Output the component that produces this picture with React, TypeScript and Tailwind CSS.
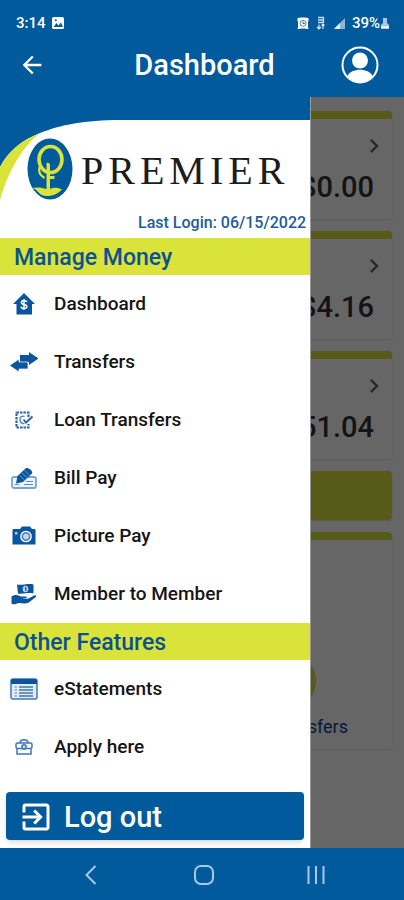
import React from 'react';
import { MdArrowBack, MdChevronRight, MdExitToApp } from 'react-icons/md';

interface MenuItem {
  label: string;
  icon: React.ReactNode;
}

const accounts = [
  { id: 'checking', balance: '$0.00' },
  { id: 'savings', balance: '$4.16' },
  { id: 'loan', balance: '$51.04' }
];

function HouseIcon() {
  return <svg viewBox="0 0 24 24" className="w-6 h-6" aria-hidden="true">
      <path d="M12 1 1 12h3.500v10.500h15.500V12H23Z" fill="#0b559f" />
      <path d="M14.800 10c-.4-1.200-1.400-1.500-2.800-1.500-1.500 0-2.600.7-2.600 1.900 0 3 5.400 1.200 5.400 4.200 0 1.300-1.200 2-2.800 2s-2.700-.6-2.900-2M12 7v11" fill="none" stroke="#fff" strokeWidth="1.500" />
    </svg>;
}

function TransferIcon() {
  return <svg viewBox="0 0 30 22" className="w-[30px] h-[22px]" aria-hidden="true">
      <path d="M11 4h9V1l9.500 6.500L20 14v-3h-9Z" fill="#0b559f" />
      <path d="M19 11h-9V8L.5 14.500 10 21v-3h9Z" fill="#0b559f" stroke="#fff" strokeWidth=".7" />
    </svg>;
}

function LoanIcon() {
  return <svg viewBox="0 0 20 20" className="w-5 h-5" aria-hidden="true">
      <path d="M14.500 7V2.500H2.500v15h12V14" fill="none" stroke="#2a66a8" strokeWidth="2.200" strokeDasharray="2.600 .9" />
      <path d="M10.500 6.500c-3-1-4.500.5-4.500 3s1.500 4.500 4.500 4" fill="none" stroke="#5d8cc0" strokeWidth="1.500" />
      <path d="m9.500 9.500 2.500 3 6.500-6" fill="none" stroke="#2a66a8" strokeWidth="1.900" />
    </svg>;
}

function BillIcon() {
  return <svg viewBox="0 0 26 22" className="w-[26px] h-[22px]" aria-hidden="true">
      <rect x="1" y="10" width="24" height="11" rx="2" fill="#eef4fa" stroke="#7ba5d1" strokeWidth="1.800" />
      <path d="M3.500 18c2-2 3 .5 5-.5M15 14.500h7M13 17.500h9" fill="none" stroke="#5d8cc0" strokeWidth="1" />
      <path d="M5 16.500 6.500 9 14.500 1.500c2-2 8 2.500 6.500 5l-9 8.500Z" fill="#0b559f" />
      <path d="m8.500 8.500 5 4.500M11 6l5 4.500M13.500 3.500l5 4.500" stroke="#7ba5d1" strokeWidth=".8" />
    </svg>;
}

function CameraIcon() {
  return <svg viewBox="0 0 24 20" className="w-6 h-5" aria-hidden="true">
      <path d="M1.500 3H8l2-2.500h8L20 3h2.500q1 0 1 1v14.500H.5V4q0-1 1-1Z" fill="#0b559f" />
      <circle cx="14" cy="10.500" r="5.200" fill="#4f84bd" stroke="#fff" strokeWidth="1.300" />
      <circle cx="14" cy="10.500" r="2.800" fill="#c4d8ec" />
      <rect x="3" y="6" width="2.500" height="2.500" fill="#a9c6e3" />
    </svg>;
}

function MemberIcon() {
  return <svg viewBox="0 0 26 22" className="w-[26px] h-[22px]" aria-hidden="true">
      <path d="M6 1.500c5 1.200 11-1.500 16.500 0v9c-5-1.300-11 1.200-15.500 0Z" fill="#0b559f" />
      <ellipse cx="14.500" cy="6" rx="2.800" ry="3.300" fill="#b9d0e8" />
      <path d="M14.800 4v4" stroke="#0b559f" strokeWidth="1.200" />
      <path d="M.5 13.500c5-3 7-.5 9.500 0h5c1.500.5 1 2-1 2h-3.500c3 .8 6 .6 8-.5l4.500-2.500c2-.8 3 .5 1.500 1.800l-7 5.400c-5 2-9-.8-12 1-2 1-5 .3-5-.2Z" fill="#0b559f" />
    </svg>;
}

function StatementIcon() {
  return <svg viewBox="0 0 28 22" className="w-7 h-[22px]" aria-hidden="true">
      <rect x="1" y="1" width="26" height="20" rx="2" fill="#e3edf7" stroke="#3d78b5" strokeWidth="1.500" />
      <path d="M1 6V3q0-2 2-2h22q2 0 2 2v3Z" fill="#0b559f" />
      <path d="M9 9h14M9 12h14M9 15h14M9 18h14" stroke="#3d78b5" strokeWidth="1.300" />
      <path d="M4.500 9H7M4.500 12H7M4.500 15H7M4.500 18H7" stroke="#85acd4" strokeWidth="1.300" />
    </svg>;
}

function BriefcaseIcon() {
  return <svg viewBox="0 0 18 18" className="w-[18px] h-[18px]" aria-hidden="true">
      <g fill="none" stroke="#3d78b5" strokeWidth="1.500">
        <path d="M5 5c0-4.500 8-4.500 8 0" />
        <rect x="1" y="5" width="16" height="5.500" rx="1.500" />
        <path d="M2 10.500v5.500h14v-5.500" />
        <circle cx="9" cy="9" r="2.200" fill="#c4d8ec" />
      </g>
    </svg>;
}

const moneyItems: MenuItem[] = [
  { label: 'Dashboard', icon: <HouseIcon /> },
  { label: 'Transfers', icon: <TransferIcon /> },
  { label: 'Loan Transfers', icon: <LoanIcon /> },
  { label: 'Bill Pay', icon: <BillIcon /> },
  { label: 'Picture Pay', icon: <CameraIcon /> },
  { label: 'Member to Member', icon: <MemberIcon /> }
];

const otherItems: MenuItem[] = [
  { label: 'eStatements', icon: <StatementIcon /> },
  { label: 'Apply here', icon: <BriefcaseIcon /> }
];

function StatusBar() {
  return <div className="flex items-center justify-between h-9 pt-[10px] pl-4 pr-[14px] text-[15px] leading-5 font-medium">
      <div className="flex items-center gap-[6px]">
        <span>3:14</span>
        <svg viewBox="0 0 12 12" className="w-3 h-3" aria-hidden="true">
          <rect width="12" height="12" rx="1.500" fill="#fff" />
          <path d="m1.500 10 3-4 2 2.500L9 5.500l2 4.500Z" fill="#005a9c" />
          <circle cx="3.800" cy="3.300" r="1" fill="#005a9c" />
        </svg>
      </div>
      <div className="flex items-center gap-[7px]">
        <svg viewBox="0 0 12 12" className="w-3 h-3" aria-hidden="true">
          <path d="M.5 1 4 .5h4l3.500.5v3L11 5v5l.5 2H9L8 11.500H4L3 12H.5L1 10V5L.5 4Z" fill="#fff" />
          <circle cx="6" cy="6.300" r="3" fill="none" stroke="#005a9c" strokeWidth=".7" />
          <path d="M6 4.500v2h1.800" fill="none" stroke="#005a9c" strokeWidth=".9" />
        </svg>
        <svg viewBox="0 0 10 14" className="w-[10px] h-[14px]" aria-hidden="true">
          <path d="M2 1.500h6M2 4h5M2 6.500h6M7.500 1v6" stroke="#c9dcec" strokeWidth="1.300" />
          <path d="M3 13V8.500M1 11l2 2 2-2M7 8v5M5.500 9.500 7 8l1.500 1.500" fill="none" stroke="#dbe8f3" strokeWidth="1.200" />
        </svg>
        <svg viewBox="0 0 12 12" className="w-3 h-3" aria-hidden="true">
          <path d="M12 1v11H1Z" fill="#8db4d3" />
          <path d="M7 6v6H1Z" fill="#e5eff7" />
        </svg>
        <div className="flex items-center">
          <span>39%</span>
          <svg viewBox="0 0 10 12" className="w-[10px] h-3" aria-hidden="true">
            <path d="M3 1h4v5l2 2v3.500H1V8l2-2Z" fill="#a9c8df" />
            <path d="M1 9.500h8v2H1Z" fill="#fff" />
          </svg>
        </div>
      </div>
    </div>;
}

function TopBar() {
  return <header className="bg-[#005a9c] text-white">
      <StatusBar />
      <div className="flex items-center justify-between h-[61px] pb-1 pl-[18px] pr-[25px]">
        <button aria-label="Back" className="w-[50px]">
          <MdArrowBack className="w-7 h-7" />
        </button>
        <h1 className="text-[29px] leading-8 font-medium">Dashboard</h1>
        <button aria-label="Profile">
          <svg viewBox="0 0 38 38" className="w-[38px] h-[38px]">
            <circle cx="19" cy="19" r="17.500" fill="none" stroke="#fff" strokeWidth="2" />
            <circle cx="19" cy="14.500" r="8" fill="#fff" />
            <path d="M6.500 30C10 21.500 28 21.500 31.500 30 25 38.500 13 38.500 6.500 30Z" fill="#fff" />
          </svg>
        </button>
      </div>
    </header>;
}

function BankLogo() {
  return <div className="flex items-center gap-2">
      <svg viewBox="0 0 46 62" className="w-[46px] h-[62px] shrink-0" aria-hidden="true">
        <ellipse cx="23" cy="31" rx="22.500" ry="30.500" fill="#005a9c" />
        <ellipse cx="23.500" cy="21.500" rx="11.500" ry="13" fill="none" stroke="#d9e33a" strokeWidth="3.600" />
        <path d="M19.500 25c1.500-.5 3.500 0 3.500 2v11h4.500v3H23v10c4-2 8-1.500 12 .5-5 5-10 6.500-15.500 6.500C12 58 12 52.500 5.500 50c5-1 9-.5 14 1Z" fill="#d9e33a" />
        <path d="M12.500 29c-1.500 5 1 8.500 5 11" fill="none" stroke="#d9e33a" strokeWidth="2.200" />
      </svg>
      <span className="pt-1 font-['Liberation_Serif',serif] text-[40px] leading-none tracking-[5px] text-[#1c1c1c]">PREMIER</span>
    </div>;
}

function MenuSection({ title, items }: { title: string; items: MenuItem[] }) {
  return <section>
      <h2 className="bg-[#d9e33a] text-[#0b5193] text-[23px] pt-[2px] leading-[35px] font-medium px-[14px]">{title}</h2>
      <ul>
        {items.map(item => <li key={item.label}>
            <a href="#" className="flex items-center h-[58px] pl-2 text-[19px] leading-6 font-medium text-[#151515]">
              <span className="flex justify-center w-8 mr-[14px]">{item.icon}</span>
              {item.label}
            </a>
          </li>)}
      </ul>
    </section>;
}

function Drawer() {
  return <nav className="[grid-area:1/1] z-10 flex flex-col w-[77%] max-w-80 bg-white border-r border-[#999999]">
      <div className="grid h-[141px]">
        <svg viewBox="0 0 310 141" preserveAspectRatio="none" className="[grid-area:1/1] w-full h-full" aria-hidden="true">
          <path d="M0 0H310V23H120C85 23 60 28 40 36 20 44 8 55 0 70Z" fill="#005a9c" />
          <path d="M0 70C8 55 20 44 40 36 22 50 8 75 0 103Z" fill="#d9e33a" />
        </svg>
        <div className="[grid-area:1/1] flex flex-col justify-between pt-[41px] pl-[27px] pr-1 pb-[3px]">
          <BankLogo />
          <p className="text-right text-base leading-6 font-medium text-[#1f5b9b]">Last Login: 06/15/2022</p>
        </div>
      </div>
      <MenuSection title="Manage Money" items={moneyItems} />
      <MenuSection title="Other Features" items={otherItems} />
      <div className="mt-auto pt-4 px-[6px] pb-2">
        <button className="flex items-center gap-[10px] w-full h-12 pt-[2px] px-3 rounded-sm bg-[#005a9c] text-white text-[29px] leading-8 font-medium shadow-md">
          <MdExitToApp className="w-9 h-9" />
          Log out
        </button>
      </div>
    </nav>;
}

function Accounts() {
  return <main className="[grid-area:1/1] flex flex-col gap-3 px-3 pt-[14px] bg-white">
      {accounts.map(account => <a key={account.id} href="#" className="flex flex-col items-end h-[108px] border-t-8 border-[#d9e33a] rounded-sm shadow-sm pt-[13px] pr-1">
          <MdChevronRight className="w-7 h-7 text-[#666666]" />
          <span className="mt-[11px] mr-[14px] text-[29px] leading-8 font-medium text-[#333333]">{account.balance}</span>
        </a>)}
      <button aria-label="Open an account" className="h-[49px] rounded-sm bg-[#d9e33a] shadow-sm" />
      <div className="flex flex-col items-end justify-end h-[217px] border-t-8 border-[#d9e33a] rounded-sm shadow-sm pr-11 pb-[10px]">
        <span className="w-[60px] h-[60px] mr-8 mb-1 rounded-full bg-[#d9e33a]" />
        <a href="#" className="text-lg leading-6 text-[#0b3f8f]">Transfers</a>
      </div>
    </main>;
}

function SystemNav() {
  return <footer className="flex items-center justify-around h-[53px] pl-9 pr-8 bg-[#005a9c]">
      <button aria-label="Back">
        <svg viewBox="0 0 20 20" className="w-5 h-5" fill="none" stroke="#a8c8e6" strokeWidth="2">
          <path d="M13.500 1 4.500 10l9 9" />
        </svg>
      </button>
      <button aria-label="Home">
        <svg viewBox="0 0 20 20" className="w-5 h-5" fill="none" stroke="#a8c8e6" strokeWidth="2">
          <rect x="1" y="1" width="18" height="18" rx="6" />
        </svg>
      </button>
      <button aria-label="Recent apps">
        <svg viewBox="0 0 20 20" className="w-5 h-5" stroke="#a8c8e6" strokeWidth="2">
          <path d="M2.500 1v18M10 1v18M17.500 1v18" />
        </svg>
      </button>
    </footer>;
}

export default function App() {
  return <div className="flex flex-col min-h-screen bg-white font-[Roboto,sans-serif]">
      <TopBar />
      <div className="grid flex-1">
        <Accounts />
        <div className="[grid-area:1/1] bg-black/60" />
        <Drawer />
      </div>
      <SystemNav />
    </div>;
}
